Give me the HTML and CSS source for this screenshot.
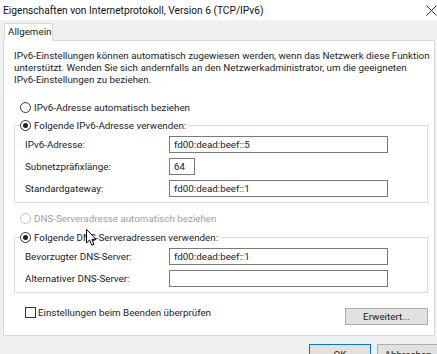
FILE: index.html
```html
<!DOCTYPE html>
<html lang="de">
<head>
<meta charset="utf-8">
<title>Eigenschaften von Internetprotokoll, Version 6 (TCP/IPv6)</title>
<link rel="stylesheet" href="styles.css">
</head>
<body>
<div class="titlebar">
  <span class="title">Eigenschaften von Internetprotokoll, Version 6 (TCP/IPv6)</span>
  <svg class="close" width="11" height="11" viewBox="0 0 11 11"><path d="M0.5 0.5L10.5 10.5M10.5 0.5L0.5 10.5"/></svg>
</div>
<div class="tabs"><div class="tab">Allgemein</div></div>
<div class="panel">
  <p class="desc">IPv6-Einstellungen können automatisch zugewiesen werden, wenn das Netzwerk diese Funktion<br>unterstützt. Wenden Sie sich andernfalls an den Netzwerkadministrator, um die geeigneten<br>IPv6-Einstellungen zu beziehen.</p>

  <div class="option first"><span class="radio"></span><span>IPv6-Adresse automatisch beziehen</span></div>
  <fieldset class="group">
    <legend class="option"><span class="radio checked"></span><span>Folgende IPv6-Adresse verwenden:</span></legend>
    <div class="rows">
      <div class="row"><span class="lbl">IPv6-Adresse:</span><span class="input">fd00:dead:beef::5</span></div>
      <div class="row"><span class="lbl">Subnetzpräfixlänge:</span><span class="input small">64</span></div>
      <div class="row"><span class="lbl">Standardgateway:</span><span class="input">fd00:dead:beef::1</span></div>
    </div>
  </fieldset>

  <div class="option disabled second"><span class="radio"></span><span>DNS-Serveradresse automatisch beziehen</span></div>
  <fieldset class="group dns">
    <legend class="option"><span class="radio checked"></span><span>Folgende DNS-Serveradressen verwenden:</span></legend>
    <div class="rows">
      <div class="row"><span class="lbl">Bevorzugter DNS-Server:</span><span class="input">fd00:dead:beef::1</span></div>
      <div class="row"><span class="lbl">Alternativer DNS-Server:</span><span class="input"></span></div>
    </div>
  </fieldset>

  <div class="bottomrow">
    <label class="check"><span class="box"></span><span>Einstellungen beim Beenden überprüfen</span></label>
    <span class="btn adv">Erweitert...</span>
  </div>
</div>
<div class="footer">
  <span class="btn ok">OK</span>
  <span class="btn">Abbrechen</span>
</div>
<svg class="cursor" width="12" height="18" viewBox="0 0 12 18"><path d="M0.5 0.5L0.5 14L3.6 11L5.8 16.2L8 15.3L5.9 10.3L10 10.3Z"/></svg>
</body>
</html>
```
FILE: styles.css
```css
html, body {
  margin: 0;
  padding: 0;
}
body {
  width: 437px;
  height: 354px;
  overflow: hidden;
  background: #f0f0f0;
  font-family: Roboto, "Noto Sans", sans-serif;
  font-size: 9.8px;
  color: #1c1c1c;
  position: relative;
}
.titlebar {
  height: 20px;
  background: #fff;
  display: flex;
  align-items: center;
  padding-left: 3px;
  font-size: 10.2px;
  color: #111;
}
.close {
  margin-left: auto;
  margin-right: 0;
}
.close path {
  stroke: #333;
  stroke-width: 1;
  fill: none;
}
.tabs {
  height: 20px;
  padding-left: 4px;
  display: flex;
  align-items: flex-end;
}
.tab {
  position: relative;
  z-index: 1;
  box-sizing: border-box;
  height: 18px;
  width: 49px;
  margin-bottom: -1px;
  border: 1px solid #d9d9d9;
  border-bottom: none;
  background: #fff;
  padding: 1px 0 0 3px;
  line-height: 14px;
}
.panel {
  box-sizing: border-box;
  margin-left: 3px;
  width: 432px;
  height: 296px;
  border: 1px solid #d9d9d9;
  background: #fff;
  padding: 9px 0 0 10px;
}
.desc {
  margin: 0;
  line-height: 12px;
  white-space: nowrap;
}
.option {
  display: flex;
  align-items: center;
  height: 14px;
  white-space: nowrap;
}
.option.first {
  margin-top: 14px;
  padding-left: 6px;
}
.option.second {
  margin-top: 8px;
  padding-left: 6px;
}
.radio {
  box-sizing: border-box;
  width: 11px;
  height: 11px;
  border: 1px solid #333;
  border-radius: 50%;
  margin-right: 3px;
  display: flex;
  align-items: center;
  justify-content: center;
}
.radio.checked::after {
  content: "";
  width: 5px;
  height: 5px;
  border-radius: 50%;
  background: #222;
}
.disabled {
  color: #a0a0a0;
}
.disabled .radio {
  border-color: #c4c4c4;
}
.group {
  box-sizing: border-box;
  width: 414px;
  margin: 4px 0 0 0;
  padding: 0;
  border: 1px solid #dcdcdc;
  min-width: 0;
}
.group.dns {
  margin-top: 5px;
}
.group legend {
  padding: 0 2px 0 0;
  margin-left: 5px;
}
.rows {
  display: flex;
  flex-direction: column;
  gap: 5px;
  padding: 4px 0 5px 10px;
}
.row {
  display: flex;
  align-items: center;
  height: 17px;
}
.lbl {
  width: 144px;
  white-space: nowrap;
}
.input {
  box-sizing: border-box;
  width: 219px;
  height: 17px;
  border: 1px solid #7a7a7a;
  padding: 0 4px;
  line-height: 15px;
  white-space: nowrap;
}
.input.small {
  width: 26px;
}
.bottomrow {
  width: 414px;
  margin-top: 12px;
  display: flex;
  justify-content: space-between;
  align-items: flex-start;
}
.check {
  display: flex;
  align-items: center;
  height: 14px;
  padding-left: 11px;
}
.box {
  box-sizing: border-box;
  width: 11px;
  height: 11px;
  border: 1px solid #333;
  margin-right: 2px;
}
.btn {
  box-sizing: border-box;
  display: flex;
  align-items: center;
  justify-content: center;
  background: #e1e1e1;
  border: 1px solid #adadad;
  white-space: nowrap;
}
.btn.adv {
  width: 83px;
  height: 17px;
  margin-top: 3px;
}
.footer {
  display: flex;
  justify-content: flex-end;
  gap: 6px;
  margin-top: 8px;
  margin-right: -2px;
}
.footer .btn {
  width: 62px;
  height: 20px;
}
.footer .btn.ok {
  border-color: #0078d7;
}
.cursor {
  position: absolute;
  left: 86px;
  top: 229px;
}
.cursor path {
  fill: #fff;
  stroke: #000;
  stroke-width: 1;
}
```
